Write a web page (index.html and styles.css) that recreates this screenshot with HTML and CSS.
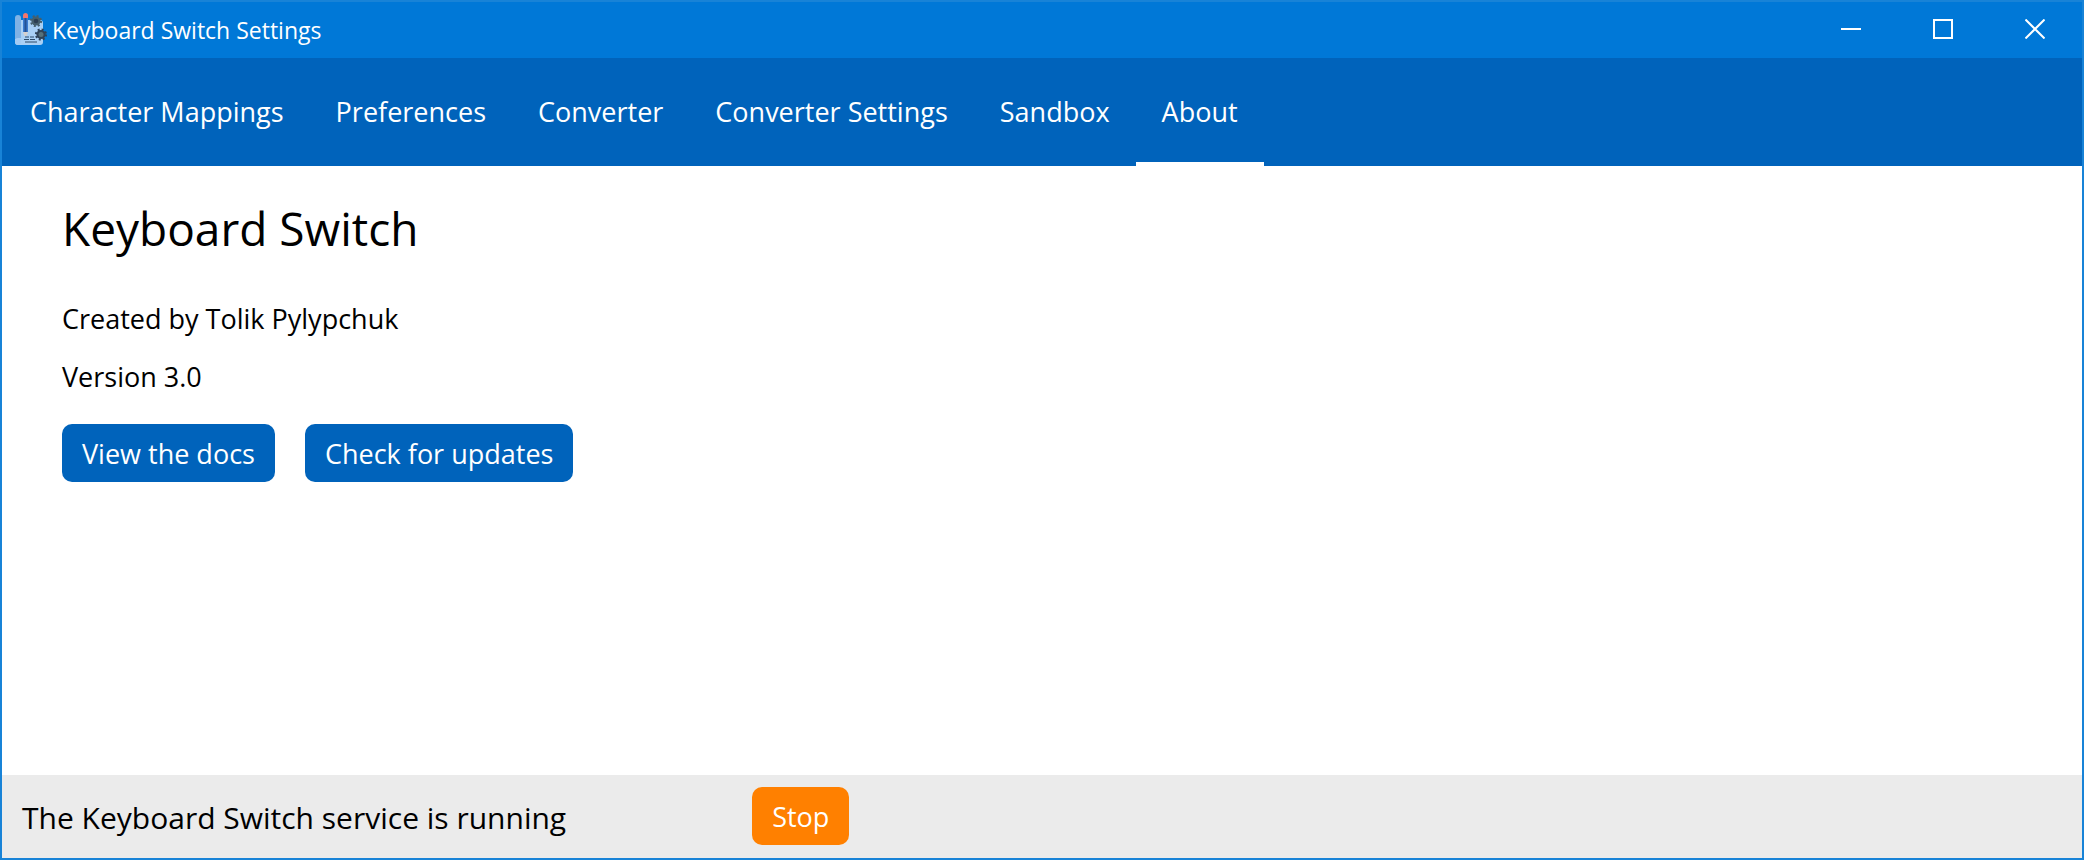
FILE: index.html
```html
<!DOCTYPE html>
<html lang="en">
<head>
<meta charset="utf-8">
<meta name="viewport" content="width=device-width, initial-scale=1">
<title>Keyboard Switch Settings</title>
<link rel="stylesheet" href="styles.css">
</head>
<body>
<div class="window">
  <header class="titlebar">
    <svg class="app-icon" viewBox="0 0 32 34" aria-hidden="true">
      <path d="M5 7h20q3 0 3 3v19q0 3-3 3H3q-3 0-3-3v-3h5z" fill="#a9d0f5"/>
      <path d="M0 5q0-3 3-3t3 3v21H0z" fill="#7fb2e5"/>
      <path d="M0 28q0-3 3-3h3v4q0 3-3 3t-3-3z" fill="#a3cbf3"/>
      <path d="M8 5h5v14H8z" fill="#3a7bd0"/>
      <path d="M9.500 5h2v14h-2z" fill="#245294"/>
      <path d="M8 19h5l-1.500 4h-2z" fill="#d5d0cd"/>
      <path d="M8 5V2.500Q8 0 10.500 0T13 2.500V5z" fill="#f4766d"/>
      <path d="M10 24h4m1 0h4M9 26.500h5m1 0h5M10 29h12" stroke="#2c4a68" stroke-width="1" fill="none"/>
      <circle cx="21" cy="8" r="5" fill="none" stroke="#455f6c" stroke-width="2.200" stroke-dasharray="1.963 1.964"/>
      <circle cx="21" cy="8" r="4.600" fill="#455f6c"/>
      <circle cx="21" cy="8" r="2.300" fill="#2c3f52"/>
      <circle cx="26" cy="21.500" r="5" fill="none" stroke="#2f4358" stroke-width="2.200" stroke-dasharray="1.963 1.964"/>
      <circle cx="26" cy="21.500" r="4.600" fill="#2f4358"/>
      <circle cx="26" cy="21.500" r="2.500" fill="#56717a"/>
    </svg>
    <span class="title">Keyboard Switch Settings</span>
    <div class="controls">
      <button class="control" type="button" aria-label="Minimize"><svg class="glyph" viewBox="0 0 20 20"><path d="M0 10h20"/></svg></button>
      <button class="control" type="button" aria-label="Maximize"><svg class="glyph" viewBox="0 0 20 20"><path d="M1 1h18v18H1z"/></svg></button>
      <button class="control" type="button" aria-label="Close"><svg class="glyph" viewBox="0 0 20 20"><path d="M.5.5l19 19M19.500.5l-19 19"/></svg></button>
    </div>
  </header>
  <nav class="tabs">
    <a class="tab" href="#mappings">Character Mappings</a>
    <a class="tab" href="#preferences">Preferences</a>
    <a class="tab" href="#converter">Converter</a>
    <a class="tab" href="#converter-settings">Converter Settings</a>
    <a class="tab" href="#sandbox">Sandbox</a>
    <a class="tab active" href="#about" aria-current="page">About</a>
  </nav>
  <main class="content">
    <h1 class="heading">Keyboard Switch</h1>
    <p class="line">Created by Tolik Pylypchuk</p>
    <p class="line">Version 3.0</p>
    <div class="actions">
      <button class="button" type="button">View the docs</button>
      <button class="button" type="button">Check for updates</button>
    </div>
  </main>
  <footer class="status">
    <span class="status-text">The Keyboard Switch service is running</span>
    <button class="button stop" type="button">Stop</button>
  </footer>
</div>
</body>
</html>
```
FILE: styles.css
```css
* {
  box-sizing: border-box;
}

body {
  margin: 0;
  font-family: "Open Sans", "Noto Sans", sans-serif;
  font-size: 27px;
  line-height: 38px;
  color: #000;
}

.window {
  display: flex;
  flex-direction: column;
  min-height: 100vh;
  border: 2px solid #1883d7;
  background: #fff;
}

.titlebar {
  display: flex;
  align-items: center;
  height: 56px;
  padding: 0 1px 0 13px;
  background: #0078d7;
  color: #fff;
}

.app-icon {
  width: 32px;
  height: 34px;
}

.title {
  margin-left: 5px;
  font-size: 23px;
}

.controls {
  display: flex;
  align-self: stretch;
  margin-left: auto;
}

.control {
  display: grid;
  place-items: center;
  width: 92px;
  padding: 0 0 2px;
  border: 0;
  background: none;
}

.glyph {
  width: 20px;
  height: 20px;
  fill: none;
  stroke: #fff;
  stroke-width: 2;
}

.tabs {
  display: flex;
  height: 108px;
  padding-left: 2px;
  background: #0063bb;
}

.tab {
  display: flex;
  align-items: center;
  padding: 4px 26px 0;
  border-bottom: 4px solid transparent;
  color: #fff;
  text-decoration: none;
}

.tab.active {
  border-bottom-color: #fff;
}

.content {
  flex: 1;
  padding: 30px 60px;
}

.heading {
  margin: 0 0 40px;
  font-size: 46px;
  line-height: 64px;
  font-weight: 400;
}

.line {
  margin: 0 0 20px;
}

.actions {
  display: flex;
  gap: 30px;
  margin-top: 28px;
}

.button {
  height: 58px;
  padding: 2px 20px 0;
  border: 0;
  border-radius: 10px;
  background: #0063bb;
  color: #fff;
  font: inherit;
}

.status {
  display: flex;
  align-items: center;
  gap: 186px;
  padding: 12px 20px 13px;
  background: #ebebeb;
}

.status-text {
  padding-top: 4px;
  font-size: 30px;
}

.stop {
  background: #ff8000;
}
```
